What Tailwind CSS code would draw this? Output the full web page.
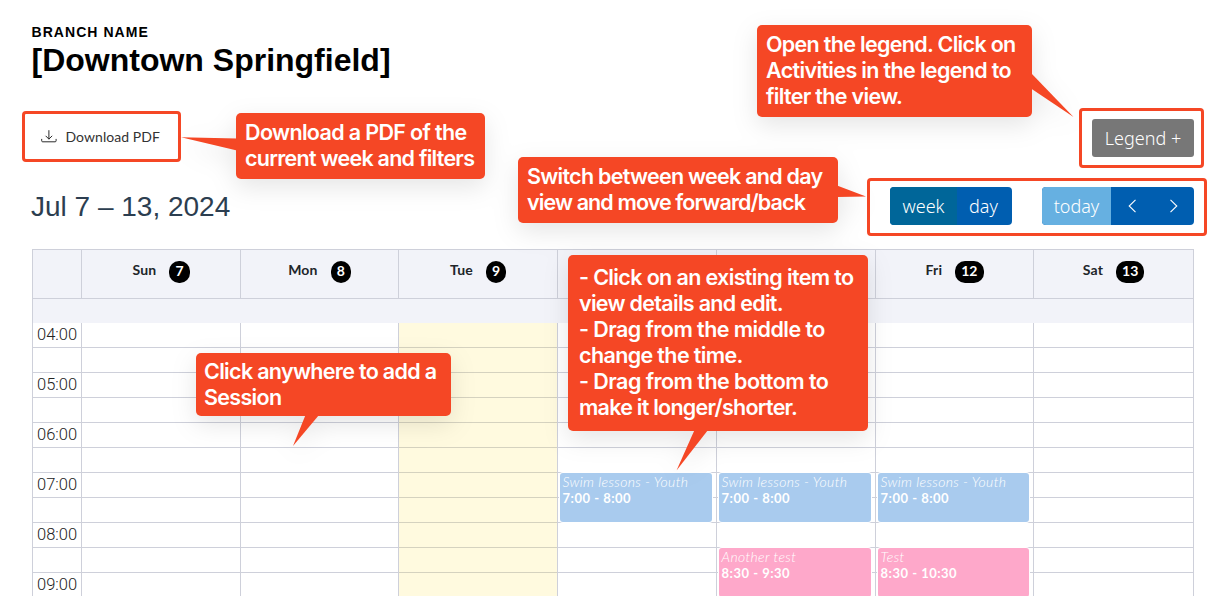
<!DOCTYPE html>
<html lang="en">
<head>
<meta charset="utf-8">
<title>Branch calendar</title>
<script src="https://cdn.jsdelivr.net/npm/@tailwindcss/browser@4"></script>
</head>
<body class="relative h-[596px] w-[1229px] overflow-hidden bg-white">
<div class="flex h-[249px] justify-between pr-[22px] pl-[22px]">
  <div class="flex flex-col items-start pt-[24px]">
    <div class="pl-[9.5px] font-['Liberation_Sans',sans-serif] text-[14px] leading-4 font-bold tracking-[1.05px] whitespace-nowrap">BRANCH NAME</div>
    <h1 class="pl-[9.5px] font-['Liberation_Sans',sans-serif] text-[32px] leading-10 font-bold whitespace-nowrap">[Downtown Springfield]</h1>
    <div class="mt-[31px] flex h-[51px] w-[159px] items-center rounded-[4px] border-3 border-[#f54725] pl-[16px]">
      <svg class="h-[13px] w-[16px]" viewBox="0 0 16 13" fill="none" stroke="#2a2a2a" stroke-width="1" stroke-linecap="round" stroke-linejoin="round"><path d="M.7 9.3v1.5q0 1 1 1h12.4q1 0 1-1V9.3M7.9.6v8.3M4.9 6.1l3 3 3-3"/></svg>
      <span class="ml-[8.5px] font-['Lato',sans-serif] text-[14px] tracking-[0.06px] whitespace-nowrap text-[#333]">Download PDF</span>
    </div>
    <h2 class="mt-[29px] pl-[9px] font-['Liberation_Sans',sans-serif] text-[28px] leading-8 whitespace-nowrap text-[#2c3e50]">Jul 7 – 13, 2024</h2>
  </div>
  <div class="flex flex-col items-end gap-[10px] pt-[108px] font-['Noto_Sans',sans-serif] text-[18px] leading-6 font-[340] text-white">
    <div class="mr-[3px] flex h-[60px] w-[125px] items-center justify-end rounded-[4px] border-3 border-[#f54725] pr-[7px]">
      <div class="flex h-[38px] w-[102px] items-center justify-center rounded-[3px] bg-[#777] whitespace-nowrap">Legend +</div>
    </div>
    <div class="flex h-[58px] w-[340px] items-center gap-[30px] rounded-[4px] border-3 border-[#f54725] pr-[10px] pb-[2px] pl-[20px]">
      <div class="flex h-[38px] w-[122px] overflow-hidden rounded-[4px] bg-[#005eb0]">
        <div class="flex w-[67px] items-center justify-center bg-[#006699]">week</div>
        <div class="flex flex-1 items-center justify-center pr-[2px]">day</div>
      </div>
      <div class="flex h-[38px] w-[152px] overflow-hidden rounded-[4px] bg-[#005eb0]">
        <div class="flex w-[69px] items-center justify-center bg-[#66b0e1]">today</div>
        <div class="flex w-[42px] items-center justify-center"><svg class="h-[14px] w-[8px]" viewBox="0 0 8 14" fill="none" stroke="#fff" stroke-width="1.1"><path d="M7.5 .8 1.2 7 7.5 13.2"/></svg></div>
        <div class="flex w-[41px] items-center justify-center"><svg class="h-[14px] w-[8px]" viewBox="0 0 8 14" fill="none" stroke="#fff" stroke-width="1.1"><path d="M.5 .8 6.8 7 .5 13.2"/></svg></div>
      </div>
    </div>
  </div>
</div>

<div class="ml-[32px] w-[1162px] border-t border-r border-[#ced0da]">
  <div class="grid h-[49px] grid-cols-[49px_159px_158px_159px_159px_159px_158px_160px] border-b border-[#ced0da] bg-[#f2f3f9] font-['Lato',sans-serif] text-[14px] font-bold text-[#212529]" id="head"></div>
  <div class="h-[24px] border-l border-[#ced0da] bg-[#f2f3f9]"></div>
  <div class="grid h-[275px] overflow-hidden">
    <div class="col-start-1 row-start-1 font-['Roboto',sans-serif] text-[16.5px] font-light text-[#222]" id="rows"></div>
    <div class="col-start-1 row-start-1 grid grid-cols-[49px_159px_158px_159px_159px_159px_158px_160px]" id="cols"></div>
  </div>
</div>

<svg class="absolute top-0 left-0 h-[596px] w-[1229px] drop-shadow-[0_8px_12px_rgba(0,0,0,0.1)]" viewBox="0 0 1229 596" fill="#f54725">
  <path d="M181 137.2 237 138.6V150.5z"/><rect x="236" y="113" width="249" height="66" rx="5"/>
  <path d="M1031 73 1073.5 117 1031 88.5z"/><rect x="757" y="25" width="275" height="92" rx="5"/>
  <path d="M837 185.5 866 196.5 837 197z"/><rect x="518" y="157" width="320" height="66" rx="5"/>
  <path d="M305.5 415H319L293 446z"/><rect x="196" y="353" width="255" height="63" rx="5"/>
  <path d="M694.5 430H708L676.5 470.5z"/><rect x="568" y="255" width="300" height="176" rx="5"/>
</svg>
<div class="absolute inset-0 font-['Inter',sans-serif] text-[21.5px] leading-[26px] font-semibold tracking-[-0.68px] whitespace-nowrap text-white">
  <div class="absolute top-[119px] left-[245px]"><span class="tracking-[-0.65px]">Download a PDF of the</span><br><span class="tracking-[-0.74px]">current week and filters</span></div>
  <div class="absolute top-[31px] left-[766px]">Open the legend. Click on<br><span class="tracking-[-0.65px]">Activities in the legend to</span><br>filter the view.</div>
  <div class="absolute top-[163px] left-[527px]"><span class="tracking-[-0.73px]">Switch between week and day</span><br><span class="tracking-[-0.89px]">view and move forward/back</span></div>
  <div class="absolute top-[358px] left-[204px]">Click anywhere to add a<br>Session</div>
  <div class="absolute top-[264px] left-[579px] tracking-[-0.63px]">- Click on an existing item to<br><span class="tracking-[-0.7px]">view details and edit.</span><br><span class="tracking-[-0.56px]">- Drag from the middle to</span><br>change the time.<br><span class="tracking-[-0.54px]">- Drag from the bottom to</span><br><span class="tracking-[-0.75px]">make it longer/shorter.</span></div>
</div>
<script>
const days = [['Sun', 7], ['Mon', 8], ['Tue', 9], null, null, ['Fri', 12], ['Sat', 13]];
document.getElementById('head').innerHTML = '<div class="border-l border-[#ced0da]"></div>' + days.map(day => day ?
  `<div class="flex justify-center gap-[13px] border-l border-[#ced0da] pt-[11px]"><span class="-mt-px h-[20px] leading-[20px] tracking-[0.2px]">${day[0]}</span><span class="h-[22px] rounded-[10px] bg-black px-[6px] text-[14px] leading-[20px] text-white">${day[1]}</span></div>` : '<div class="border-l border-[#ced0da]"></div>').join('');
let rows = '';
for (let i = 0; i < 11; i++) {
  const label = i % 2 ? '' : `0${4 + i / 2}:00`;
  rows += `<div class="h-[25px] border-b border-[#ced0da] pl-[5px] leading-[23px]">${label}</div>`;
}
document.getElementById('rows').innerHTML = rows;
const swim = ['Swim lessons - Youth', '7:00 - 8:00', 'mt-[150px] bg-[#a9cbee]'];
const events = { 3: [swim], 4: [swim, ['Another test', '8:30 - 9:30', 'mt-[26px] bg-[#fea8ca]']], 5: [swim, ['Test', '8:30 - 10:30', 'mt-[26px] bg-[#fea8ca]']] };
document.getElementById('cols').innerHTML = '<div class="border-l border-[#ced0da]"></div>' + days.map((_, i) =>
  `<div class="border-l border-[#ced0da] pr-[4px] pl-[2px] ${i === 2 ? 'bg-[#ffdc28]/15' : ''}">` + (events[i] || []).map(([t, h, c]) =>
  `<div class="h-[49px] rounded-[3px] pt-px pl-[2.5px] font-['Lato',sans-serif] leading-4 whitespace-nowrap text-white shadow-[0_0_0_1px_#fff] ${c}"><div class="text-[14px] tracking-[0.36px] italic font-light">${t}</div><div class="text-[13px] font-bold tracking-[0.5px]">${h}</div></div>`).join('') + '</div>').join('');
</script>
</body>
</html>
